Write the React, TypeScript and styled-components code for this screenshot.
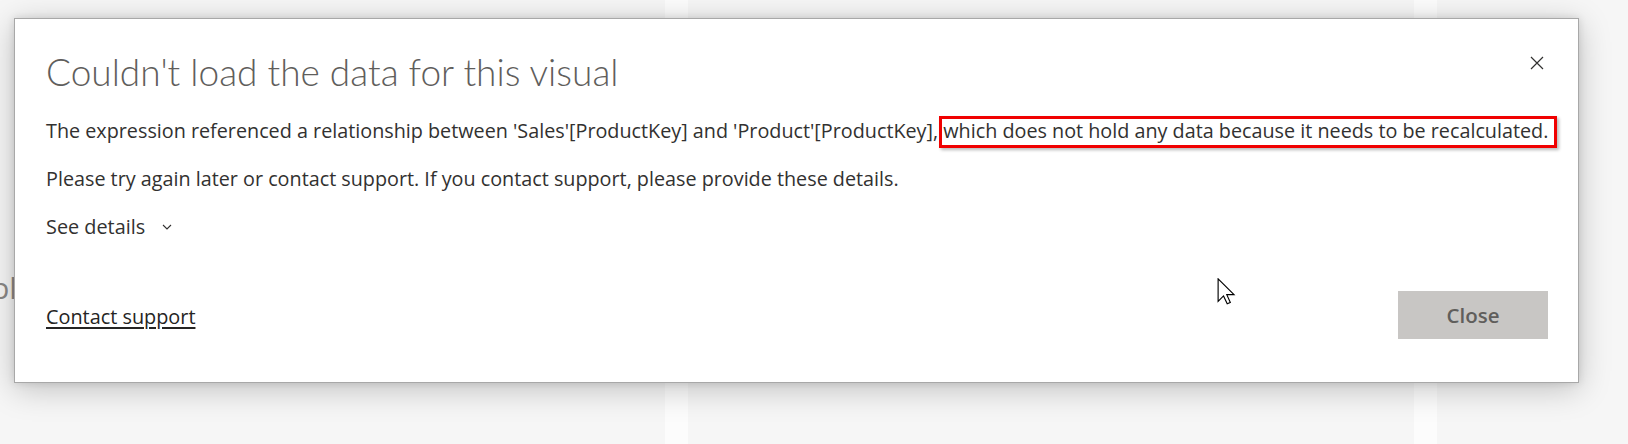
import React from "react";
import styled, { createGlobalStyle } from "styled-components";

const GlobalStyle = createGlobalStyle`
  html, body { margin: 0; padding: 0; background: #fbfbfb; }
  body { font-family: "Open Sans", "Noto Sans", sans-serif; }
  * { box-sizing: border-box; }
`;

const Page = styled.div`
  position: relative;
  width: 1628px;
  height: 444px;
  overflow: hidden;
  display: grid;
  grid-template-columns: 665px 726px 1fr;
  column-gap: 23px;
  background: #fcfcfc;
`;

const Panel = styled.div`
  background: #f6f6f6;
  overflow: hidden;
`;

const PanelLabel = styled.div`
  margin: 270px 0 0 -9px;
  font-family: "Open Sans", sans-serif;
  font-size: 30px;
  line-height: 36px;
  color: #8a8886;
  white-space: nowrap;
`;

const Dialog = styled.div`
  position: absolute;
  left: 14px;
  top: 18px;
  width: 1565px;
  height: 365px;
  background: #ffffff;
  border: 1px solid #a8a8a8;
  box-shadow: 0 6px 30px rgba(0, 0, 0, 0.22), 0 0 8px rgba(0, 0, 0, 0.12);
  padding: 30px 30px 43px 31px;
  display: flex;
  flex-direction: column;
`;

const Header = styled.div`
  display: flex;
  align-items: flex-start;
  justify-content: space-between;
`;

const Title = styled.h1`
  margin: 0;
  font-family: "Lato", "Open Sans", sans-serif;
  font-weight: 300;
  font-size: 37px;
  line-height: 46px;
  color: #5f5e5c;
`;

const IconButton = styled.button`
  width: 32px;
  height: 32px;
  margin: -2px -5px 0 0;
  border: 0;
  background: transparent;
  display: flex;
  align-items: center;
  justify-content: center;
  padding: 0;
  color: #323130;
`;

const Body = styled.div`
  display: flex;
  flex-direction: column;
  gap: 20px;
  margin-top: 22px;
`;

const Text = styled.p`
  margin: 0;
  font-size: 19.77px;
  line-height: 28px;
  color: #323130;
  white-space: nowrap;
`;

const Highlight = styled.span`
  position: relative;
  &::after {
    content: "";
    position: absolute;
    left: -4px;
    right: -9px;
    top: -1px;
    bottom: -4px;
    border: 3px solid #f00000;
    box-shadow: 2px 2px 3px rgba(0, 0, 0, 0.28);
  }
`;

const Details = styled.button`
  align-self: flex-start;
  display: flex;
  align-items: center;
  gap: 17px;
  padding: 0;
  border: 0;
  background: transparent;
  font-family: "Open Sans", sans-serif;
  font-size: 19.85px;
  line-height: 28px;
  color: #323130;
`;

const Footer = styled.div`
  margin-top: auto;
  display: flex;
  align-items: center;
  justify-content: space-between;
`;

const Link = styled.a`
  margin-top: 4px;
  font-size: 19.85px;
  line-height: 28px;
  color: #252423;
  text-decoration: underline;
  text-decoration-thickness: 2px;
  text-underline-offset: 3px;
`;

const CloseButton = styled.button`
  width: 150px;
  height: 48px;
  border: 0;
  background: #c8c6c4;
  color: #605e5c;
  font-family: "Open Sans", sans-serif;
  font-weight: 600;
  font-size: 20.5px;
`;

const Cursor = styled.svg`
  position: absolute;
  left: 1202px;
  top: 259px;
`;

export default function App() {
  return (
    <>
      <GlobalStyle />
      <Page>
        <Panel>
          <PanelLabel>pla</PanelLabel>
        </Panel>
        <Panel />
        <Panel />
        <Dialog>
          <Header>
            <Title>Couldn't load the data for this visual</Title>
            <IconButton aria-label="Close">
              <svg width="14" height="14" viewBox="0 0 14 14">
                <path d="M1 1 L13 13 M13 1 L1 13" stroke="#323130" strokeWidth="1.2" fill="none" />
              </svg>
            </IconButton>
          </Header>
          <Body>
            <Text>
              The expression referenced a relationship between 'Sales'[ProductKey] and 'Product'[ProductKey],{" "}
              <Highlight>which does not hold any data because it needs to be recalculated.</Highlight>
            </Text>
            <Text>Please try again later or contact support. If you contact support, please provide these details.</Text>
            <Details>
              See details
              <svg width="10" height="6" viewBox="0 0 10 6">
                <path d="M1 1 L5 5 L9 1" stroke="#323130" strokeWidth="1.1" fill="none" />
              </svg>
            </Details>
          </Body>
          <Footer>
            <Link href="#">Contact support</Link>
            <CloseButton>Close</CloseButton>
          </Footer>
          <Cursor width="19" height="27" viewBox="0 0 13 19">
            <path
              d="M0.6 0.6 L0.6 16.4 L4.4 12.6 L7 18.2 L9.2 17.2 L6.7 11.7 L11.8 11.7 Z"
              fill="#ffffff"
              stroke="#000000"
              strokeWidth="0.8"
              strokeLinejoin="miter"
            />
          </Cursor>
        </Dialog>
      </Page>
    </>
  );
}
